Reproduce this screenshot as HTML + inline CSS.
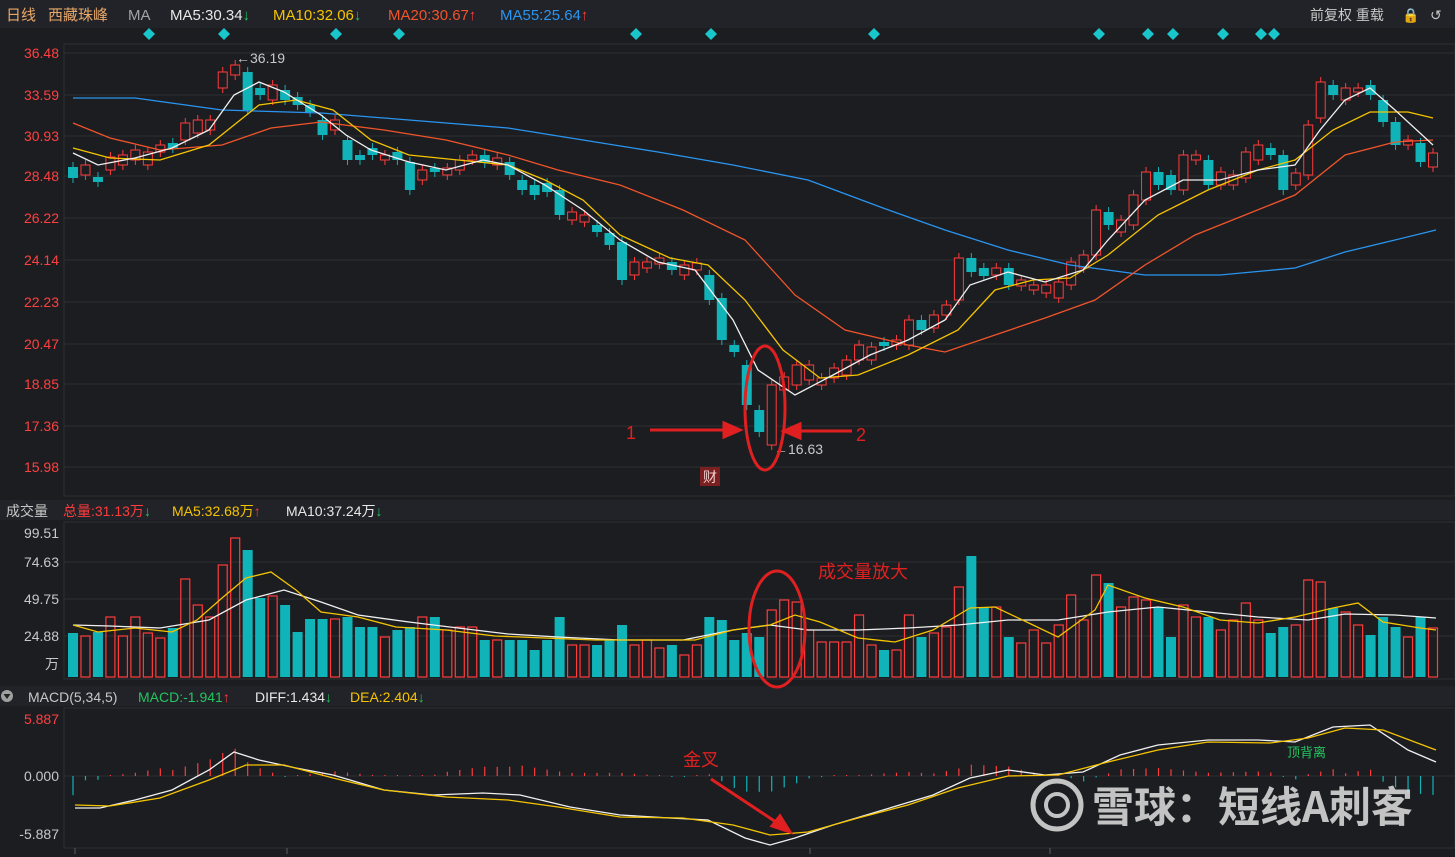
<!DOCTYPE html>
<html><head><meta charset="utf-8">
<style>
html,body{margin:0;padding:0;background:#1c1d21;width:1455px;height:857px;overflow:hidden}
body{font-family:"Liberation Sans","Noto Sans CJK SC",sans-serif;position:relative}
svg{position:absolute;left:0;top:0}
</style></head><body>
<svg id="s" width="1455" height="857" xmlns="http://www.w3.org/2000/svg" font-family="Liberation Sans, Noto Sans CJK SC, sans-serif">
<rect x="0" y="0" width="1455" height="857" fill="#1c1d21"/>
<rect x="0" y="0" width="1455" height="28" fill="#222328"/>
<rect x="0" y="500" width="1455" height="20" fill="#222328"/>
<rect x="0" y="686" width="1455" height="20" fill="#222328"/>
<g font-size="15">
<text x="6" y="20" fill="#e8a86a">日线</text>
<text x="48" y="20" fill="#e8a86a">西藏珠峰</text>
<text x="128" y="20" fill="#a0a4aa">MA</text>
<text x="170" y="20" fill="#e8e8e8">MA5:30.34<tspan fill="#22c55e" font-weight="bold">↓</tspan></text>
<text x="273" y="20" fill="#f5c400">MA10:32.06<tspan fill="#22c55e" font-weight="bold">↓</tspan></text>
<text x="388" y="20" fill="#f0542a">MA20:30.67<tspan fill="#ff3b3b" font-weight="bold">↑</tspan></text>
<text x="500" y="20" fill="#2a95f0">MA55:25.64<tspan fill="#ff3b3b" font-weight="bold">↑</tspan></text>
<text x="1310" y="20" fill="#c8c8c8" font-size="14">前复权  重载</text>
<text x="1402" y="20" fill="#c8c8c8" font-size="14">🔒</text>
<text x="1430" y="20" fill="#c8c8c8" font-size="14">↺</text>
</g>
<g font-size="14">
<text x="6" y="516" fill="#c8c8c8">成交量</text>
<text x="63" y="516" fill="#ff3b3b">总量:31.13万<tspan fill="#22c55e" font-weight="bold">↓</tspan></text>
<text x="172" y="516" fill="#f5c400">MA5:32.68万<tspan fill="#ff3b3b" font-weight="bold">↑</tspan></text>
<text x="286" y="516" fill="#e8e8e8">MA10:37.24万<tspan fill="#22c55e" font-weight="bold">↓</tspan></text>
<text x="28" y="702" fill="#c8c8c8">MACD(5,34,5)</text>
<text x="138" y="702" fill="#22c55e">MACD:-1.941<tspan fill="#ff3b3b" font-weight="bold">↑</tspan></text>
<text x="255" y="702" fill="#e8e8e8">DIFF:1.434<tspan fill="#22c55e" font-weight="bold">↓</tspan></text>
<text x="350" y="702" fill="#f5c400">DEA:2.404<tspan fill="#22c55e" font-weight="bold">↓</tspan></text>
</g>
<circle cx="7" cy="696" r="6" fill="#a0a0a0"/><path d="M3.5 694 L10.5 694 L7 699Z" fill="#222"/>
<g id="grid" stroke="#2c2e33" stroke-width="1"></g>
<rect x="64" y="44" width="1391" height="452" fill="none" stroke="#2c2e33"/>
<rect x="64" y="522" width="1391" height="157" fill="none" stroke="#2c2e33"/>
<rect x="64" y="708" width="1391" height="140" fill="none" stroke="#2c2e33"/>
<g font-size="14" text-anchor="end" fill="#ff4040" id="plab"></g>
<g font-size="14" text-anchor="end" fill="#c8c8c8">
<text x="59" y="538">99.51</text><text x="59" y="567">74.63</text><text x="59" y="604">49.75</text><text x="59" y="641">24.88</text><text x="59" y="669">万</text>
<text x="59" y="724" fill="#ff4040">5.887</text><text x="59" y="781">0.000</text><text x="59" y="839">-5.887</text>
</g>
<g id="dia" fill="#18c6cc"></g>
<g id="cand"></g>
<g id="vol"></g>
<g id="macd"></g>
<g fill="none" stroke-width="1.3">
<polyline stroke="#2a95f0" points="73,98 135,98 222,110 321,113 409,120 508,128 583,140 658,152 733,165 808,180 883,208 945,230 1008,250 1070,265 1145,275 1220,275 1295,268 1345,252 1395,240 1436,230"/>
<polyline stroke="#f0542a" points="73,123 110,138 160,150 222,145 271,128 321,122 384,130 446,140 508,155 558,170 620,185 683,210 745,240 795,295 845,330 908,345 945,352 995,335 1045,318 1095,300 1145,265 1195,235 1245,215 1295,195 1345,155 1395,142 1433,140"/>
<polyline stroke="#f5c400" points="73,148 110,158 160,160 209,145 259,105 296,100 333,110 371,140 409,155 458,160 508,165 545,180 583,200 620,235 670,258 708,265 745,300 783,350 820,378 858,375 908,355 958,330 995,290 1033,280 1070,278 1108,255 1158,215 1208,190 1258,170 1295,160 1333,130 1370,112 1408,112 1433,118"/>
<polyline stroke="#f0f0f0" points="73,153 98,165 135,158 172,148 209,130 234,95 259,82 284,92 321,115 346,135 371,150 409,162 446,170 483,160 508,165 545,185 583,210 620,240 658,262 695,270 733,320 758,370 795,395 833,375 870,355 908,340 945,320 970,285 1008,272 1045,282 1083,270 1108,240 1145,200 1183,180 1220,180 1258,170 1295,165 1320,130 1345,100 1370,88 1395,110 1433,145"/>
<polyline id="dif" stroke="#f0f0f0" points="75,808 100,808 135,800 172,790 209,770 234,752 259,760 296,768 333,775 384,790 433,795 483,793 520,795 570,807 620,815 670,818 708,820 745,838 770,845 795,838 833,825 883,810 933,795 970,778 1008,770 1045,775 1083,772 1120,755 1158,745 1208,740 1258,740 1295,742 1333,727 1370,725 1408,750 1436,762"/>
<polyline id="dea" stroke="#f5c400" points="75,805 110,806 160,798 209,780 246,765 284,765 333,778 384,790 446,797 508,800 558,807 620,817 683,818 733,825 770,835 808,832 858,818 908,805 958,788 1008,776 1058,775 1108,762 1158,750 1208,742 1270,743 1308,738 1345,728 1383,730 1436,750"/>
</g>
<g id="vma" fill="none" stroke-width="1.3">
<polyline stroke="#f0f0f0" points="73,625 110,626 160,628 209,620 246,600 284,590 321,602 358,615 409,622 458,628 508,634 558,637 620,640 683,640 733,630 770,625 808,630 858,630 908,628 958,625 1008,620 1058,620 1108,612 1158,607 1208,612 1258,617 1308,620 1345,614 1395,615 1436,618"/>
<polyline stroke="#f5c400" points="73,625 98,632 135,628 172,632 197,620 222,598 246,578 271,572 296,590 321,612 358,617 396,627 446,630 495,636 545,638 595,640 645,640 695,640 733,630 770,625 795,615 820,622 858,638 895,642 933,630 970,608 995,607 1033,625 1058,637 1095,610 1108,585 1145,598 1183,607 1220,620 1258,623 1295,617 1333,608 1358,603 1383,622 1420,628 1436,630"/>
</g>
<g stroke="#5a5c62"><line x1="75" y1="848" x2="75" y2="854"/><line x1="287" y1="848" x2="287" y2="854"/><line x1="810" y1="848" x2="810" y2="854"/><line x1="1050" y1="848" x2="1050" y2="854"/></g>
<g font-size="14" fill="#c8c8c8"><text x="236" y="63">←36.19</text><text x="774" y="454">←16.63</text></g>
<rect x="700" y="467" width="20" height="19" fill="#7a2020"/><text x="703" y="482" font-size="14" fill="#f0d0d0">财</text>
<g stroke="#e02020" stroke-width="3" fill="none">
<ellipse cx="765" cy="408" rx="20" ry="62"/>
<ellipse cx="777" cy="629" rx="28" ry="58"/>
<line x1="650" y1="430" x2="733" y2="430"/><path d="M724 423 L740 430 L724 437Z" fill="#e02020"/>
<line x1="852" y1="431" x2="792" y2="431"/><path d="M800 424 L784 431 L800 438Z" fill="#e02020"/>
<line x1="711" y1="779" x2="782" y2="826"/><path d="M772 826 L790 832 L780 816Z" fill="#e02020"/>
</g>
<g font-size="18" fill="#e02020"><text x="626" y="439">1</text><text x="856" y="441">2</text><text x="818" y="578">成交量放大</text><text x="683" y="766">金叉</text></g>
<text x="1287" y="757" font-size="13" fill="#22c55e">顶背离</text>
<g opacity="0.82">
<circle cx="1057" cy="805" r="24" fill="none" stroke="#e8e8e8" stroke-width="5"/>
<circle cx="1057" cy="805" r="11" fill="none" stroke="#e8e8e8" stroke-width="4"/>
<text x="1092" y="822" font-size="42" font-weight="bold" fill="#e8e8e8" font-family="Noto Sans CJK SC, sans-serif">雪球：短线A刺客</text>
</g>
</svg>
<script>
var NS="http://www.w3.org/2000/svg";
function el(p,t,a){var e=document.createElementNS(NS,t);for(var k in a)e.setAttribute(k,a[k]);document.getElementById(p).appendChild(e);return e;}
var pl=[[53,"36.48"],[95,"33.59"],[136,"30.93"],[176,"28.48"],[218,"26.22"],[260,"24.14"],[302,"22.23"],[344,"20.47"],[384,"18.85"],[426,"17.36"],[467,"15.98"]];
pl.forEach(function(p){el("grid","line",{x1:64,x2:1455,y1:p[0],y2:p[0]});var t=el("plab","text",{x:59,y:p[0]+5});t.textContent=p[1];});
[562,599,636].forEach(function(y){el("grid","line",{x1:64,x2:1455,y1:y,y2:y});});
el("grid","line",{x1:64,x2:1455,y1:776,y2:776});
[149,224,336,399,636,711,874,1099,1148,1173,1223,1261,1274].forEach(function(x){el("dia","path",{d:"M"+x+" 28 L"+(x+6)+" 34 L"+x+" 40 L"+(x-6)+" 34Z"});});
var cd=[["c",167,178],["r",165,175],["c",177,182],["r",157,170],["r",155,165],["r",150,160],["r",152,165],["r",145,152],["c",143,148],["r",123,140],["r",120,133],["r",120,130],["r",72,88],["r",65,75],["c",72,110],["c",88,95],["r",85,100],["c",90,100],["c",97,105],["c",105,112],["c",120,135],["r",120,130],["c",140,160],["c",155,160],["c",148,155],["r",155,160],["c",152,160],["c",162,190],["r",170,180],["c",168,172],["r",168,175],["r",160,170],["r",155,160],["c",155,163],["r",158,165],["c",162,175],["c",180,190],["c",185,195],["c",183,192],["c",190,215],["r",212,220],["r",215,222],["c",225,232],["c",233,245],["c",242,280],["r",262,275],["r",262,268],["r",258,264],["c",262,270],["r",265,275],["r",263,270],["c",275,300],["c",298,340],["c",345,352],["c",365,405],["c",410,432],["r",385,445],["r",377,390],["r",365,385],["r",365,380],["r",378,385],["r",368,378],["r",360,375],["r",345,360],["r",347,360],["c",342,346],["r",340,345],["r",320,345],["c",320,330],["r",315,328],["r",305,315],["r",258,300],["c",258,272],["c",268,276],["r",268,275],["c",268,285],["r",280,286],["r",285,290],["r",285,293],["r",282,298],["r",262,285],["r",255,268],["r",210,255],["c",212,225],["r",220,232],["r",195,225],["r",172,200],["c",172,185],["c",175,190],["r",155,190],["r",155,160],["c",160,185],["r",172,185],["r",175,185],["r",152,178],["r",145,160],["c",148,155],["c",155,190],["r",173,185],["r",125,175],["r",82,118],["c",85,95],["r",88,100],["r",88,92],["c",85,95],["c",100,122],["c",122,145],["r",140,145],["c",143,162],["r",153,167]];
var vt=[633,636,632,617,636,617,633,638,628,579,605,617,565,538,550,598,596,605,632,619,619,619,617,627,627,637,630,627,617,617,630,627,627,640,640,640,640,650,640,617,645,645,645,640,625,645,640,648,645,655,645,617,620,640,633,637,610,600,602,630,642,642,642,615,645,650,650,615,637,633,627,587,556,607,607,637,643,630,643,625,595,620,575,583,607,597,600,607,637,605,617,617,630,620,603,620,633,627,625,580,582,608,612,625,635,617,627,637,617,628];
var n=cd.length,sp=(1433-73)/(n-1);
var RED="#ff3b3b",CY="#10b3b8";
cd.forEach(function(c,i){var x=73+i*sp,col=c[0]=="r"?RED:CY,t=c[1],b=c[2];
el("cand","line",{x1:x,x2:x,y1:t-5,y2:b+5,stroke:col,"stroke-width":1});
if(c[0]=="r")el("cand","rect",{x:x-4.5,y:t,width:9,height:Math.max(b-t,1),fill:"#1c1d21",stroke:col,"stroke-width":1});
else el("cand","rect",{x:x-5,y:t,width:10,height:Math.max(b-t,1),fill:col});
var v=vt[Math.min(i,vt.length-1)];
if(c[0]=="r")el("vol","rect",{x:x-4.5,y:v,width:9,height:677-v,fill:"none",stroke:RED,"stroke-width":1.2});
else el("vol","rect",{x:x-5,y:v,width:10,height:677-v,fill:CY});});
function pts(id){return document.getElementById(id).getAttribute("points").trim().split(/\s+/).map(function(p){return p.split(",").map(Number);});}
function interp(a,x){for(var i=0;i<a.length-1;i++){if(x>=a[i][0]&&x<=a[i+1][0]){var f=(x-a[i][0])/(a[i+1][0]-a[i][0]);return a[i][1]+f*(a[i+1][1]-a[i][1]);}}return a[a.length-1][1];}
var D=pts("dif"),E=pts("dea");
for(var i=0;i<n;i++){var x=73+i*sp,h=(interp(E,x)-interp(D,x))*1.6;
if(Math.abs(h)<1)h=h<0?-1:1;
el("macd","line",{x1:x,x2:x,y1:776,y2:776-h,stroke:h>0?RED:CY,"stroke-width":1.2});}
</script>
</body></html>
